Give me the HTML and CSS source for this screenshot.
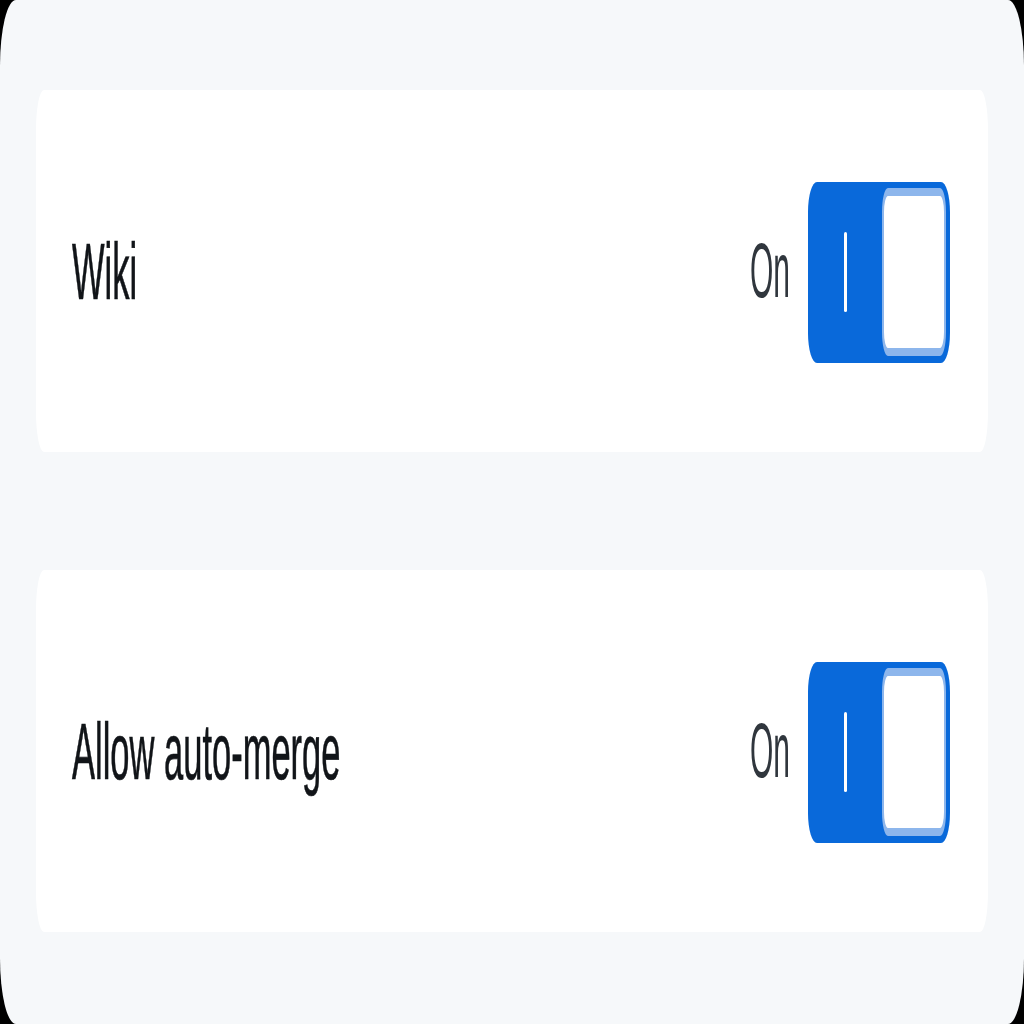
FILE: index.html
```html
<!DOCTYPE html>
<html lang="en">
<head>
<meta charset="utf-8">
<title>Repository features</title>
<link rel="stylesheet" href="styles.css">
</head>
<body>
<div class="panel">
  <div class="card">
    <span class="label">Wiki</span>
    <div class="control">
      <span class="status">On</span>
      <button class="toggle" type="button" aria-pressed="true">
        <span class="bar"></span>
        <span class="knob"></span>
      </button>
    </div>
  </div>
  <div class="card">
    <span class="label">Allow auto-merge</span>
    <div class="control">
      <span class="status">On</span>
      <button class="toggle" type="button" aria-pressed="true">
        <span class="bar"></span>
        <span class="knob"></span>
      </button>
    </div>
  </div>
</div>
</body>
</html>
```

FILE: styles.css
```css
html, body {
  margin: 0;
  padding: 0;
  background: #000;
}

.panel {
  width: 1024px;
  height: 1024px;
  box-sizing: border-box;
  background: #f6f8fa;
  border-radius: 16px / 66px;
  padding: 90px 36px 92px;
  display: flex;
  flex-direction: column;
  gap: 118px;
}

.card {
  height: 362px;
  background: #ffffff;
  border-radius: 8px / 40px;
  padding: 0 38px 0 36px;
  display: flex;
  align-items: center;
  justify-content: space-between;
}

.label {
  display: inline-block;
  font-family: "Liberation Sans", Arial, sans-serif;
  font-size: 34.5px;
  line-height: 40px;
  color: #111418;
  -webkit-text-stroke: 0.3px #111418;
  transform: scaleY(2.3);
}

.control {
  display: flex;
  align-items: center;
  gap: 18px;
}

.status {
  display: inline-block;
  font-family: "Liberation Sans", Arial, sans-serif;
  font-size: 30px;
  line-height: 34px;
  color: #30363d;
  transform: scaleY(2.6);
}

.toggle {
  width: 142px;
  height: 181px;
  margin: 2px 0 0;
  padding: 6px 4px 7px 0;
  border: 0;
  border-radius: 9px / 30px;
  background: #0969da;
  display: flex;
  align-items: stretch;
  box-sizing: border-box;
}

.bar {
  width: 3px;
  height: 80px;
  margin: 44px 0 0 36px;
  background: #ffffff;
  border-radius: 2px;
  flex: none;
}

.knob {
  margin-left: auto;
  width: 64px;
  box-sizing: border-box;
  background: #ffffff;
  border: solid #8db6ec;
  border-width: 8px 2px;
  border-radius: 6px / 24px;
}
```
